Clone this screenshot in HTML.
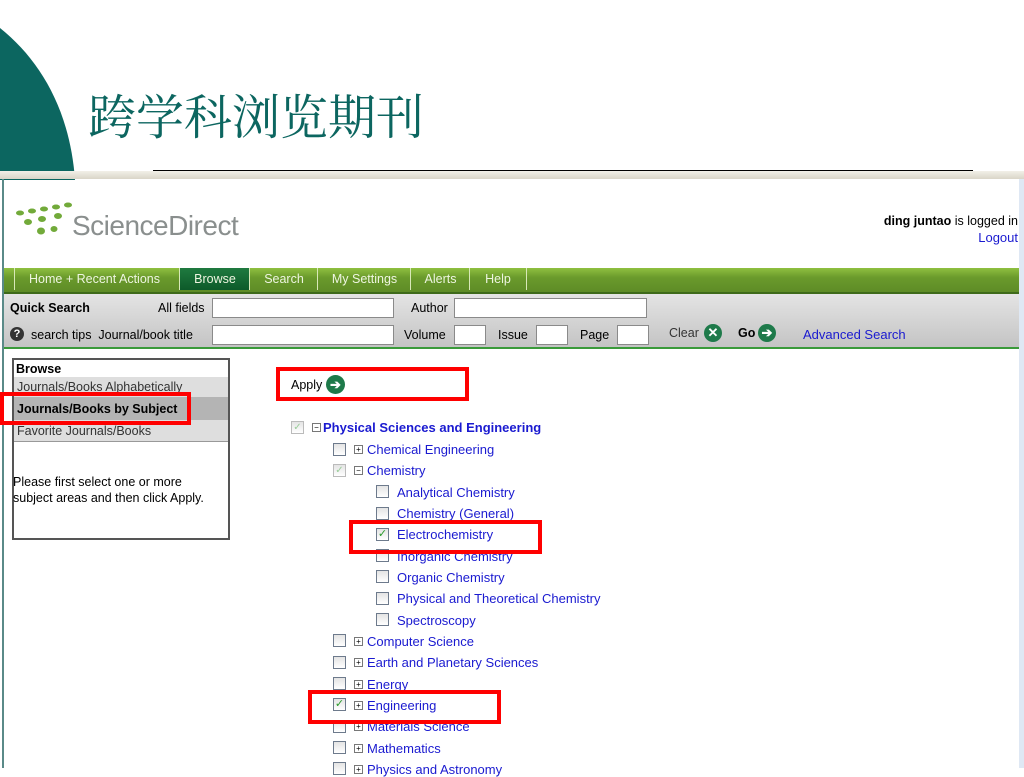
<!DOCTYPE html>
<html><head><meta charset="utf-8"><style>
body{margin:0;width:1024px;height:768px;position:relative;overflow:hidden;background:#fff;font-family:"Liberation Sans",Arial,sans-serif;}
.a{position:absolute;}
.t{font-size:12.5px;color:#000;white-space:nowrap}
.in{position:absolute;background:#fff;border:1px solid #8a8a8a;height:18px}
.cb{position:absolute;width:11px;height:11px;border:1px solid #6d7a8c;background:linear-gradient(#e4e4e4,#fff)}
.pm{position:absolute;width:7px;height:7px;border:1px solid #777;font-size:8px;line-height:7px;text-align:center;color:#000}
.lk{position:absolute;font-size:13px;color:#1a1ad0;white-space:nowrap}
.red{position:absolute;border:4px solid #f00;box-sizing:border-box}
.nav span{position:absolute;top:0;height:22px;line-height:22px;color:#eef5e0;font-size:12.5px;border-left:1px solid #d8e8b8}
</style></head><body>
<svg class="a" style="left:0;top:0" width="80" height="180"><path d="M0,28 C40,60 70,110 75,180 L0,180Z" fill="#0c6660"/></svg>
<div class="a" style="left:88px;top:82px;font-size:48px;color:#0c6660;font-family:'Noto Serif CJK SC','Liberation Serif',serif;line-height:64px">跨学科浏览期刊</div>
<div class="a" style="left:153px;top:170px;width:820px;height:1px;background:#000"></div>
<div class="a" style="left:0;top:171px;width:1024px;height:8px;background:linear-gradient(#f2f0e8,#d9d5c8)"></div>
<div class="a" style="left:2px;top:179px;width:2px;height:589px;background:#5a8a88"></div>
<div class="a" style="left:1019px;top:179px;width:5px;height:589px;background:#dfe8f4"></div>
<svg class="a" style="left:14px;top:202px" width="60" height="42"><g fill="#72aa3a"><ellipse cx="6" cy="11" rx="4" ry="2.5"/><ellipse cx="18" cy="9" rx="4" ry="2.5"/><ellipse cx="30" cy="7" rx="4" ry="2.5"/><ellipse cx="42" cy="5" rx="4" ry="2.5"/><ellipse cx="54" cy="3" rx="4" ry="2.5"/><ellipse cx="14" cy="20" rx="4" ry="3"/><ellipse cx="28" cy="17" rx="4" ry="3"/><ellipse cx="44" cy="14" rx="4" ry="3"/><ellipse cx="27" cy="29" rx="4" ry="3.5"/><ellipse cx="40" cy="27" rx="3.5" ry="3"/></g></svg>
<div class="a" style="left:72px;top:210px;font-size:28px;color:#8a8f8e;letter-spacing:-0.5px">ScienceDirect</div>
<div class="a t" style="right:6px;top:214px"><b>ding juntao</b> is logged in</div>
<div class="lk" style="right:6px;top:230px">Logout</div>
<div class="a nav" style="left:4px;top:268px;width:1015px;height:24px;background:linear-gradient(#8fc040,#6a9a2c 40%,#5e8c26);border-bottom:2px solid #3e6a1a">
<span style="left:10px;width:165px;padding-left:14px">Home + Recent Actions</span>
<span style="left:175px;width:70px;text-align:center;background:linear-gradient(#1f7a40,#0d5a2a)">Browse</span>
<span style="left:245px;width:68px;text-align:center">Search</span>
<span style="left:313px;width:93px;text-align:center">My Settings</span>
<span style="left:406px;width:59px;text-align:center">Alerts</span>
<span style="left:465px;width:56px;text-align:center;border-right:1px solid #d8e8b8">Help</span>
</div>
<div class="a" style="left:4px;top:294px;width:1015px;height:53px;background:linear-gradient(#e4e4e4,#c4c4c4)"></div>
<div class="a" style="left:4px;top:347px;width:1015px;height:2px;background:#3a9a3a"></div>
<div class="a t" style="left:10px;top:301px"><b>Quick Search</b></div>
<div class="a t" style="left:158px;top:301px">All fields</div>
<div class="in" style="left:212px;top:298px;width:180px"></div>
<div class="a t" style="left:411px;top:301px">Author</div>
<div class="in" style="left:454px;top:298px;width:191px"></div>
<div class="a" style="left:10px;top:327px;width:14px;height:14px;border-radius:50%;background:#333;color:#fff;font-size:11px;font-weight:bold;text-align:center;line-height:14px">?</div>
<div class="a t" style="left:31px;top:328px">search tips &nbsp;Journal/book title</div>
<div class="in" style="left:212px;top:325px;width:180px"></div>
<div class="a t" style="left:404px;top:328px">Volume</div>
<div class="in" style="left:454px;top:325px;width:30px"></div>
<div class="a t" style="left:498px;top:328px">Issue</div>
<div class="in" style="left:536px;top:325px;width:30px"></div>
<div class="a t" style="left:580px;top:328px">Page</div>
<div class="in" style="left:617px;top:325px;width:30px"></div>
<div class="a t" style="left:669px;top:326px;color:#333">Clear</div>
<div class="a" style="left:704px;top:324px;width:18px;height:18px;border-radius:50%;background:#1e7a4a;color:#fff;font-size:13px;font-weight:bold;text-align:center;line-height:18px">✕</div>
<div class="a t" style="left:738px;top:326px"><b>Go</b></div>
<div class="a" style="left:758px;top:324px;width:18px;height:18px;border-radius:50%;background:#1e7a4a;color:#fff;font-size:13px;font-weight:bold;text-align:center;line-height:18px">➔</div>
<div class="lk" style="left:803px;top:327px">Advanced Search</div>
<div class="a" style="left:12px;top:358px;width:214px;height:178px;border:2px solid #555"></div>
<div class="a t" style="left:16px;top:362px"><b>Browse</b></div>
<div class="a" style="left:14px;top:377px;width:214px;height:20px;background:#dedede"></div>
<div class="a t" style="left:17px;top:380px;color:#333">Journals/Books Alphabetically</div>
<div class="a" style="left:14px;top:397px;width:214px;height:23px;background:#b4b4b4"></div>
<div class="a t" style="left:17px;top:402px"><b>Journals/Books by Subject</b></div>
<div class="a" style="left:14px;top:420px;width:214px;height:21px;background:#dedede;border-bottom:1px solid #999"></div>
<div class="a t" style="left:17px;top:424px;color:#333">Favorite Journals/Books</div>
<div class="a t" style="left:13px;top:474px;line-height:16px">Please first select one or more<br>subject areas and then click Apply.</div>
<div class="a t" style="left:291px;top:378px">Apply</div>
<div class="a" style="left:326px;top:375px;width:19px;height:19px;border-radius:50%;background:#1e7a4a;color:#fff;font-size:13px;font-weight:bold;text-align:center;line-height:19px">➔</div>
<div class="cb" style="left:291px;top:421px;border-color:#bbb;color:#9c9;font-size:10px;line-height:11px;text-align:center">✓</div>
<div class="pm" style="left:312px;top:423px">−</div>
<div class="lk" style="left:323px;top:420px;font-weight:bold">Physical Sciences and Engineering</div>
<div class="cb" style="left:333px;top:443px"></div><div class="pm" style="left:354px;top:445px">+</div><div class="lk" style="left:367px;top:442px">Chemical Engineering</div>
<div class="cb" style="left:333px;top:464px;border-color:#bbb;color:#9c9;font-size:10px;line-height:11px;text-align:center">✓</div><div class="pm" style="left:354px;top:466px">−</div><div class="lk" style="left:367px;top:463px">Chemistry</div>
<div class="cb" style="left:376px;top:485px"></div><div class="lk" style="left:397px;top:485px">Analytical Chemistry</div>
<div class="cb" style="left:376px;top:507px"></div><div class="lk" style="left:397px;top:506px">Chemistry (General)</div>
<div class="cb" style="left:376px;top:528px;color:#2a9a2a;font-size:11px;line-height:11px;text-align:center">✓</div><div class="lk" style="left:397px;top:527px">Electrochemistry</div>
<div class="cb" style="left:376px;top:549px"></div><div class="lk" style="left:397px;top:549px">Inorganic Chemistry</div>
<div class="cb" style="left:376px;top:570px"></div><div class="lk" style="left:397px;top:570px">Organic Chemistry</div>
<div class="cb" style="left:376px;top:592px"></div><div class="lk" style="left:397px;top:591px">Physical and Theoretical Chemistry</div>
<div class="cb" style="left:376px;top:613px"></div><div class="lk" style="left:397px;top:613px">Spectroscopy</div>
<div class="cb" style="left:333px;top:634px"></div><div class="pm" style="left:354px;top:637px">+</div><div class="lk" style="left:367px;top:634px">Computer Science</div>
<div class="cb" style="left:333px;top:656px"></div><div class="pm" style="left:354px;top:658px">+</div><div class="lk" style="left:367px;top:655px">Earth and Planetary Sciences</div>
<div class="cb" style="left:333px;top:677px"></div><div class="pm" style="left:354px;top:680px">+</div><div class="lk" style="left:367px;top:677px">Energy</div>
<div class="cb" style="left:333px;top:698px;color:#2a9a2a;font-size:11px;line-height:11px;text-align:center">✓</div><div class="pm" style="left:354px;top:701px">+</div><div class="lk" style="left:367px;top:698px">Engineering</div>
<div class="cb" style="left:333px;top:720px"></div><div class="pm" style="left:354px;top:722px">+</div><div class="lk" style="left:367px;top:719px">Materials Science</div>
<div class="cb" style="left:333px;top:741px"></div><div class="pm" style="left:354px;top:744px">+</div><div class="lk" style="left:367px;top:741px">Mathematics</div>
<div class="cb" style="left:333px;top:762px"></div><div class="pm" style="left:354px;top:765px">+</div><div class="lk" style="left:367px;top:762px">Physics and Astronomy</div>
<div class="red" style="left:0;top:392px;width:191px;height:33px"></div>
<div class="red" style="left:276px;top:367px;width:193px;height:34px"></div>
<div class="red" style="left:349px;top:520px;width:193px;height:34px"></div>
<div class="red" style="left:308px;top:690px;width:193px;height:34px"></div>
</body></html>
